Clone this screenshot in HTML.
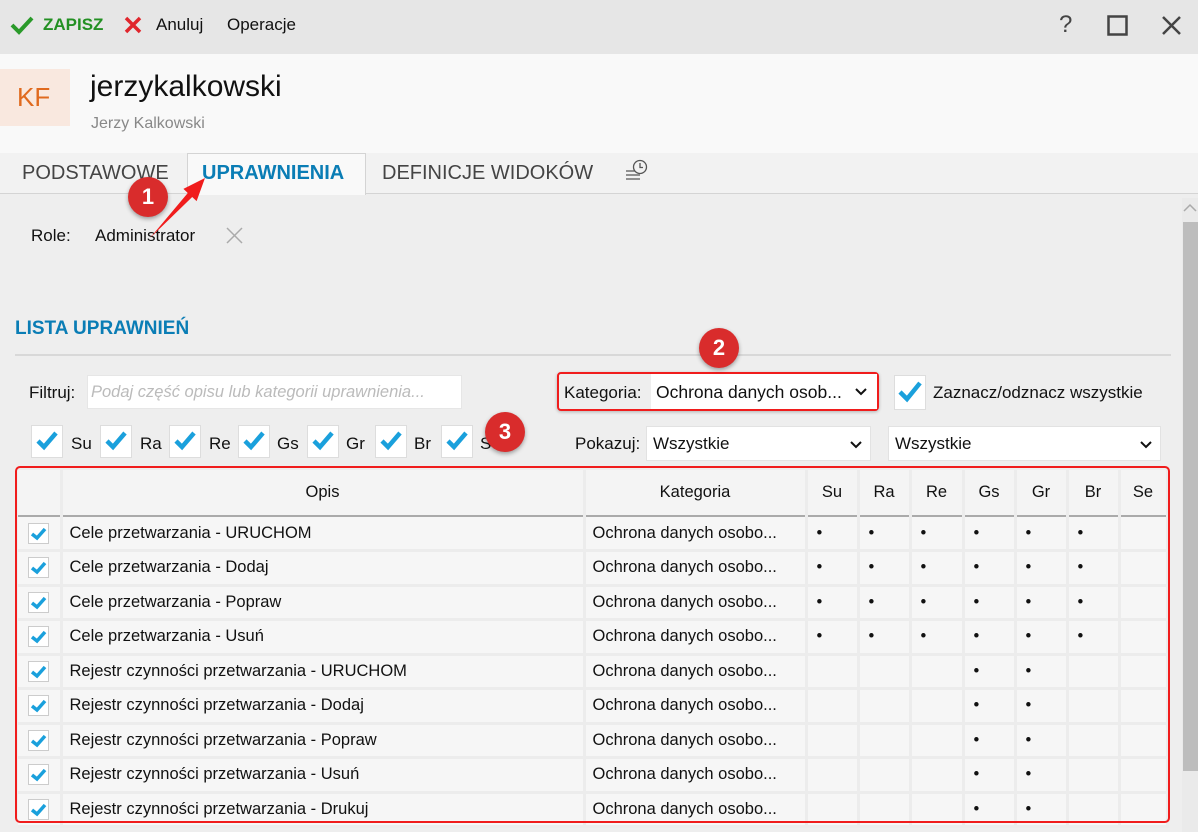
<!DOCTYPE html>
<html><head><meta charset="utf-8">
<style>
*{box-sizing:border-box;margin:0;padding:0}
body{width:1198px;height:832px;overflow:hidden;background:#eeeeee;font-family:"Liberation Sans",sans-serif;color:#111;position:relative}
.a{position:absolute;white-space:nowrap}
.tb{left:0;top:0;width:1198px;height:54px;background:#e6e6e6}
.hd{left:0;top:54px;width:1198px;height:99px;background:#f9f9f9}
.tabs{left:0;top:153px;width:1198px;height:41px;background:#f2f2f2;border-bottom:1px solid #d4d4d4}
.tab{font-size:20px;color:#444;top:162px}
.cb{background:#fff;border:1px solid #ddd}
.sel{background:#fff;border:1px solid #e2e2e2;font-size:17px;padding:7px 6px}
.chev{position:absolute;right:8px;top:9px}
table{position:absolute;left:18px;top:470px;border-collapse:collapse;table-layout:fixed;font-size:16.5px}
td,th{border-right:3px solid #ececec;border-bottom:3px solid #ececec;background:#f6f6f6;white-space:nowrap;overflow:hidden}
th{font-weight:normal;height:46px;border-bottom:2px solid #aaa;text-align:center;background:#f4f4f4}
td{height:34.5px;padding-left:7px}
td.c{padding:0;text-align:center}
td.d{padding-left:9px}
.rc{display:inline-block;width:21px;height:21px;background:#fff;border:1px solid #ccc;vertical-align:middle}
.badge{width:40px;height:40px;border-radius:50%;background:#d92c2c;color:#fff;font-size:22px;font-weight:bold;text-align:center;line-height:40px;box-shadow:0 2px 4px rgba(0,0,0,.35)}
.fl{font-size:17px;top:434px}
</style></head><body>
<div class="a tb"></div>
<svg class="a" style="left:10px;top:15px" width="24" height="20"><path d="M2 10 L9 17 L22 3" stroke="#2a9a2a" stroke-width="4" fill="none"/></svg>
<div class="a" style="left:43px;top:15px;font-size:17px;font-weight:bold;color:#239023">ZAPISZ</div>
<svg class="a" style="left:124px;top:16px" width="18" height="18"><path d="M2 2L16 16M16 2L2 16" stroke="#e0262c" stroke-width="3.5"/></svg>
<div class="a" style="left:156px;top:15px;font-size:17px">Anuluj</div>
<div class="a" style="left:227px;top:15px;font-size:17px">Operacje</div>
<div class="a" style="left:1059px;top:11px;font-size:24px;color:#444">?</div>
<svg class="a" style="left:1107px;top:15px" width="22" height="22"><rect x="1.5" y="1.5" width="18" height="18" stroke="#444" stroke-width="2.5" fill="none"/></svg>
<svg class="a" style="left:1161px;top:15px" width="22" height="22"><path d="M2 2L19 19M19 2L2 19" stroke="#444" stroke-width="2.5"/></svg>

<div class="a hd"></div>
<div class="a" style="left:0;top:69px;width:70px;height:57px;background:#f9e8df"></div>
<div class="a" style="left:17px;top:82px;font-size:26px;color:#e06a1f">KF</div>
<div class="a" style="left:90px;top:70px;font-size:30px;color:#111">jerzykalkowski</div>
<div class="a" style="left:91px;top:115px;font-size:16px;color:#888">Jerzy Kalkowski</div>

<div class="a tabs"></div>
<div class="a" style="left:187px;top:153px;width:179px;height:42px;background:#f9f9f9;border:1px solid #d4d4d4;border-bottom:none"></div>
<div class="a tab" style="left:22px">PODSTAWOWE</div>
<div class="a tab" style="left:202px;color:#0a7db5;font-weight:bold">UPRAWNIENIA</div>
<div class="a tab" style="left:382px">DEFINICJE WIDOKÓW</div>
<svg class="a" style="left:624px;top:158px" width="28" height="28"><g stroke="#555" stroke-width="1.3" fill="none"><path d="M2 13h9M2 17h14M2 21h14"/><circle cx="16" cy="9" r="6.5"/><path d="M16 5v4.5h3"/></g></svg>

<div class="a" style="left:1182px;top:198px;width:16px;height:634px;background:#eaeaea"></div>
<svg class="a" style="left:1183px;top:203px" width="14" height="10"><path d="M1 8L7 2L13 8" stroke="#aaa" stroke-width="1.5" fill="none"/></svg>
<div class="a" style="left:1183px;top:222px;width:15px;height:549px;background:#bdbdbd"></div>

<div class="a" style="left:31px;top:226px;font-size:17px">Role:</div>
<div class="a" style="left:95px;top:226px;font-size:17px">Administrator</div>
<svg class="a" style="left:226px;top:227px" width="17" height="17"><path d="M1 1L16 16M16 1L1 16" stroke="#aaa" stroke-width="1.5"/></svg>

<div class="a" style="left:15px;top:318px;font-size:19px;font-weight:bold;color:#0a7db5">LISTA UPRAWNIEŃ</div>
<div class="a" style="left:15px;top:354px;width:1156px;height:2px;background:#d8d8d8"></div>

<div class="a" style="left:29px;top:383px;font-size:17px">Filtruj:</div>
<div class="a" style="left:87px;top:375px;width:375px;height:34px;background:#fff;border:1px solid #e6e6e6"></div>
<div class="a" style="left:91px;top:383px;font-size:16.5px;font-style:italic;color:#bbb">Podaj część opisu lub kategorii uprawnienia...</div>

<div class="a" style="left:557px;top:372px;width:322px;height:39px;border:2px solid #f01c1c;border-radius:4px;background:#eeeeee;box-shadow:0 1px 3px rgba(0,0,0,.25)"></div>
<div class="a" style="left:564px;top:383px;font-size:17px">Kategoria:</div>
<div class="a" style="left:651px;top:374px;width:226px;height:35px;background:#fff"></div>
<div class="a" style="left:656px;top:382px;font-size:17.5px">Ochrona danych osob...</div>
<svg class="a" style="left:855px;top:387px" width="12" height="9"><path d="M1 2L6 7L11 2" stroke="#111" stroke-width="2" fill="none"/></svg>

<div class="a cb" style="left:894px;top:375px;width:32px;height:35px"></div>
<svg class="a" style="left:897px;top:380px" width="26" height="24"><path d="M3 12L10 19L23 3" stroke="#1aa0dc" stroke-width="4.5" fill="none"/></svg>
<div class="a" style="left:933px;top:383px;font-size:17px">Zaznacz/odznacz wszystkie</div>

<div class="a" style="left:575px;top:434px;font-size:17px">Pokazuj:</div>
<div class="a sel" style="left:646px;top:426px;width:225px;height:35px">Wszystkie<svg class="chev" width="12" height="9" style="top:13px"><path d="M1 2L6 7L11 2" stroke="#111" stroke-width="2" fill="none"/></svg></div>
<div class="a sel" style="left:888px;top:426px;width:273px;height:35px">Wszystkie<svg class="chev" width="12" height="9" style="top:13px"><path d="M1 2L6 7L11 2" stroke="#111" stroke-width="2" fill="none"/></svg></div>

<!-- filter checkboxes -->
<div class="a cb" style="left:31px;top:425px;width:32px;height:33px"></div><svg class="a" style="left:35px;top:430px" width="24" height="22"><path d="M3 11L9 17L21 3" stroke="#1aa0dc" stroke-width="4.5" fill="none"/></svg><div class="a fl" style="left:71px">Su</div>
<div class="a cb" style="left:100px;top:425px;width:32px;height:33px"></div><svg class="a" style="left:104px;top:430px" width="24" height="22"><path d="M3 11L9 17L21 3" stroke="#1aa0dc" stroke-width="4.5" fill="none"/></svg><div class="a fl" style="left:140px">Ra</div>
<div class="a cb" style="left:169px;top:425px;width:32px;height:33px"></div><svg class="a" style="left:173px;top:430px" width="24" height="22"><path d="M3 11L9 17L21 3" stroke="#1aa0dc" stroke-width="4.5" fill="none"/></svg><div class="a fl" style="left:209px">Re</div>
<div class="a cb" style="left:238px;top:425px;width:32px;height:33px"></div><svg class="a" style="left:242px;top:430px" width="24" height="22"><path d="M3 11L9 17L21 3" stroke="#1aa0dc" stroke-width="4.5" fill="none"/></svg><div class="a fl" style="left:277px">Gs</div>
<div class="a cb" style="left:307px;top:425px;width:32px;height:33px"></div><svg class="a" style="left:311px;top:430px" width="24" height="22"><path d="M3 11L9 17L21 3" stroke="#1aa0dc" stroke-width="4.5" fill="none"/></svg><div class="a fl" style="left:346px">Gr</div>
<div class="a cb" style="left:375px;top:425px;width:32px;height:33px"></div><svg class="a" style="left:379px;top:430px" width="24" height="22"><path d="M3 11L9 17L21 3" stroke="#1aa0dc" stroke-width="4.5" fill="none"/></svg><div class="a fl" style="left:414px">Br</div>
<div class="a cb" style="left:441px;top:425px;width:32px;height:33px"></div><svg class="a" style="left:445px;top:430px" width="24" height="22"><path d="M3 11L9 17L21 3" stroke="#1aa0dc" stroke-width="4.5" fill="none"/></svg><div class="a fl" style="left:480px">Se</div>

<table>
<colgroup><col style="width:43px"><col style="width:523px"><col style="width:222px"><col style="width:52px"><col style="width:52px"><col style="width:53px"><col style="width:52px"><col style="width:52px"><col style="width:52px"><col style="width:48px"></colgroup>
<tr><th></th><th>Opis</th><th>Kategoria</th><th>Su</th><th>Ra</th><th>Re</th><th>Gs</th><th>Gr</th><th>Br</th><th>Se</th></tr>
<tr><td class="c"><span class="rc"><svg width="19" height="19"><path d="M3 10L8 14L16 5" stroke="#1aa0dc" stroke-width="3.5" fill="none"/></svg></span></td><td>Cele przetwarzania - URUCHOM</td><td>Ochrona danych osobo...</td><td class="d">•</td><td class="d">•</td><td class="d">•</td><td class="d">•</td><td class="d">•</td><td class="d">•</td><td></td></tr>
<tr><td class="c"><span class="rc"><svg width="19" height="19"><path d="M3 10L8 14L16 5" stroke="#1aa0dc" stroke-width="3.5" fill="none"/></svg></span></td><td>Cele przetwarzania - Dodaj</td><td>Ochrona danych osobo...</td><td class="d">•</td><td class="d">•</td><td class="d">•</td><td class="d">•</td><td class="d">•</td><td class="d">•</td><td></td></tr>
<tr><td class="c"><span class="rc"><svg width="19" height="19"><path d="M3 10L8 14L16 5" stroke="#1aa0dc" stroke-width="3.5" fill="none"/></svg></span></td><td>Cele przetwarzania - Popraw</td><td>Ochrona danych osobo...</td><td class="d">•</td><td class="d">•</td><td class="d">•</td><td class="d">•</td><td class="d">•</td><td class="d">•</td><td></td></tr>
<tr><td class="c"><span class="rc"><svg width="19" height="19"><path d="M3 10L8 14L16 5" stroke="#1aa0dc" stroke-width="3.5" fill="none"/></svg></span></td><td>Cele przetwarzania - Usuń</td><td>Ochrona danych osobo...</td><td class="d">•</td><td class="d">•</td><td class="d">•</td><td class="d">•</td><td class="d">•</td><td class="d">•</td><td></td></tr>
<tr><td class="c"><span class="rc"><svg width="19" height="19"><path d="M3 10L8 14L16 5" stroke="#1aa0dc" stroke-width="3.5" fill="none"/></svg></span></td><td>Rejestr czynności przetwarzania - URUCHOM</td><td>Ochrona danych osobo...</td><td></td><td></td><td></td><td class="d">•</td><td class="d">•</td><td></td><td></td></tr>
<tr><td class="c"><span class="rc"><svg width="19" height="19"><path d="M3 10L8 14L16 5" stroke="#1aa0dc" stroke-width="3.5" fill="none"/></svg></span></td><td>Rejestr czynności przetwarzania - Dodaj</td><td>Ochrona danych osobo...</td><td></td><td></td><td></td><td class="d">•</td><td class="d">•</td><td></td><td></td></tr>
<tr><td class="c"><span class="rc"><svg width="19" height="19"><path d="M3 10L8 14L16 5" stroke="#1aa0dc" stroke-width="3.5" fill="none"/></svg></span></td><td>Rejestr czynności przetwarzania - Popraw</td><td>Ochrona danych osobo...</td><td></td><td></td><td></td><td class="d">•</td><td class="d">•</td><td></td><td></td></tr>
<tr><td class="c"><span class="rc"><svg width="19" height="19"><path d="M3 10L8 14L16 5" stroke="#1aa0dc" stroke-width="3.5" fill="none"/></svg></span></td><td>Rejestr czynności przetwarzania - Usuń</td><td>Ochrona danych osobo...</td><td></td><td></td><td></td><td class="d">•</td><td class="d">•</td><td></td><td></td></tr>
<tr><td class="c"><span class="rc"><svg width="19" height="19"><path d="M3 10L8 14L16 5" stroke="#1aa0dc" stroke-width="3.5" fill="none"/></svg></span></td><td>Rejestr czynności przetwarzania - Drukuj</td><td>Ochrona danych osobo...</td><td></td><td></td><td></td><td class="d">•</td><td class="d">•</td><td></td><td></td></tr>
</table>
<div class="a" style="left:15px;top:466px;width:1155px;height:357px;border:2px solid #f01c1c;border-radius:5px"></div>

<!-- annotations -->
<div class="a badge" style="left:128px;top:177px">1</div>
<svg class="a" style="left:130px;top:170px" width="90" height="80"><path d="M75 8 L53.4 18.9 L57.8 23 L20 68 L62.2 27 L66.6 31.1 Z" fill="#f01c1c"/></svg>
<div class="a badge" style="left:699px;top:328px">2</div>
<div class="a badge" style="left:485px;top:412px">3</div>
</body></html>
